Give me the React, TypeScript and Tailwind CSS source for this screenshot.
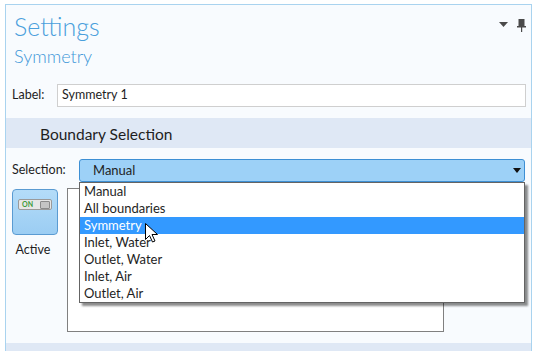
import React from 'react';

const items = ['Manual', 'All boundaries', 'Symmetry', 'Inlet, Water', 'Outlet, Water', 'Inlet, Air', 'Outlet, Air'];

export default function App() {
    return (
        <div className="w-[537px] h-[351px] bg-white overflow-hidden pt-[4px] pl-[5px] pr-[5px] font-['Lato','Liberation_Sans',sans-serif] text-[#1e1e1e]">
            <div className="relative h-[400px] border border-[#a9d3ef] bg-[#f8fbfe]">
                {/* Header */}
                <div className="flex justify-between pt-[7px] pl-[8px] pr-[5px]">
                    <div>
                        <div className="text-[25px] leading-[28px] font-light text-[#4a9fdc]">Settings</div>
                        <div className="mt-[5px] text-[18px] leading-[22px] font-light text-[#3d97d8]">Symmetry</div>
                    </div>
                    <div className="flex items-start gap-[9px] pt-[7px]">
                        <svg width="9" height="5" viewBox="0 0 9 5" className="mt-[3px]">
                            <path d="M0 0h9L4.5 5z" fill="#4a4a4a" />
                        </svg>
                        <svg width="9" height="13" viewBox="0 0 9 13">
                            <path d="M1.5 0h6v7h1.5v1.5H0V7h1.5z M4 8.5h1.2V13H4z" fill="#4a4a4a" />
                        </svg>
                    </div>
                </div>

                {/* Label */}
                <div className="mt-[17px] flex items-center pl-[6px] pr-[5px] text-[12.5px]">
                    <span className="w-[45px]">Label:</span>
                    <div className="flex-1 h-[23px] flex items-center border border-[#cfcfcf] bg-white pl-[4px] text-[12.5px]">Symmetry 1</div>
                </div>

                {/* Section */}
                <div className="mt-[11px] h-[30px] flex items-center bg-[#dfe8f5] pl-[34px] pt-[3px] text-[15.5px]">Boundary Selection</div>

                {/* Selection */}
                <div className="mt-[11px] flex items-center pl-[6px] pr-[6px] text-[12.5px]">
                    <span className="w-[67px]">Selection:</span>
                    <div className="flex-1 h-[23px] flex items-center justify-between rounded-[3px] border border-[#3d8fd4] bg-[#9dd1f7] pl-[13px] pr-[3px] text-[13px]">
                        <span>Manual</span>
                        <svg width="8" height="5" viewBox="0 0 8 5">
                            <path d="M0 0h8L4 5z" fill="#111" />
                        </svg>
                    </div>
                </div>

                {/* Body */}
                <div className="mt-[6px] flex items-start pl-[6px]">
                    <div className="w-[46px] flex flex-col items-center mt-[1px]">
                        <div className="w-[46px] h-[46px] rounded-[4px] border border-[#5a9bd2] bg-gradient-to-b from-[#b4dcf8] to-[#9bcdf3] pt-[9px] flex justify-center">
                            <div className="w-[34px] h-[11px] rounded-[2px] border border-[#9a9a9a] bg-[#e6e6e6] flex items-center justify-between pl-[3px] pr-[1px]">
                                <span className="text-[7px] leading-none font-bold text-[#3b9b3b]">ON</span>
                                <div className="w-[10px] h-[8px] rounded-[1px] border border-[#8a8a8a] bg-[#c4c4c4]" />
                            </div>
                        </div>
                        <span className="mt-[7px] text-[12.5px] leading-[15px] pr-[4px]">Active</span>
                    </div>
                    <div className="ml-[9px] w-[377px] h-[144px] border border-[#808080] bg-white" />
                </div>

                {/* Bottom band */}
                <div className="mt-[11px] h-[30px] bg-[#dfe8f5]" />

                {/* Dropdown list */}
                <div className="absolute left-[73px] top-[177px] w-[446px] h-[121px] border border-[#646464] bg-white shadow-[3px_3px_2px_rgba(0,0,0,0.45)] text-[13px]">
                    {items.map((it) => (
                        <div key={it} className={`h-[17px] leading-[17px] pl-[4px] ${it === 'Symmetry' ? 'bg-[#3399ff] text-white' : ''}`}>
                            {it}
                        </div>
                    ))}
                </div>

                {/* Cursor */}
                <svg className="absolute left-[139px] top-[218px]" width="13" height="20" viewBox="0 0 13 20">
                    <path d="M0.5 0.5v16l4-4 3 6.5 2.5-1-3-6.5h5.5z" fill="#fff" stroke="#000" strokeWidth="1" strokeLinejoin="round" />
                </svg>
            </div>
        </div>
    );
}
